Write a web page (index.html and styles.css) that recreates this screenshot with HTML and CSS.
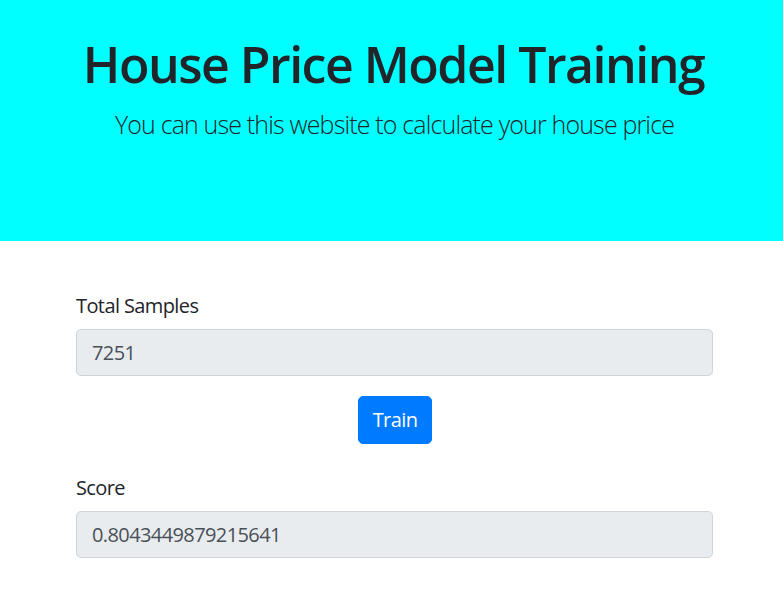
FILE: index.html
```html
<!DOCTYPE html>
<html lang="en">
<head>
<meta charset="utf-8">
<title>House Price Model Training</title>
<link rel="stylesheet" href="styles.css">
</head>
<body>
<header class="hero">
  <h1 class="hero-title">House Price Model Training</h1>
  <p class="hero-lead">You can use this website to calculate your house price</p>
</header>
<main class="container">
  <form class="train-form">
    <div class="form-group">
      <label class="form-label" for="samples">Total Samples</label>
      <input class="form-control" id="samples" type="text" value="7251" readonly>
    </div>
    <div class="actions">
      <button class="btn-train" type="button">Train</button>
    </div>
    <div class="form-group">
      <label class="form-label" for="score">Score</label>
      <input class="form-control" id="score" type="text" value="0.8043449879215641" readonly>
    </div>
  </form>
</main>
</body>
</html>
```

FILE: styles.css
```css
html, body {
  margin: 0;
  padding: 0;
  background: #ffffff;
}

body {
  font-family: "Open Sans", "Noto Sans", sans-serif;
  font-size: 20px;
  line-height: 1.5;
  color: #212529;
  letter-spacing: -0.6px;
}

.hero {
  background: #00ffff;
  padding: 34px 0 77px;
  text-align: center;
}

.hero-title {
  margin: 0 0 12px;
  padding-left: 4px;
  font-size: 50px;
  font-weight: 600;
  line-height: 1.2;
  letter-spacing: -1.5px;
  color: #212529;
}

.hero-lead {
  margin: 0 0 20px;
  padding-left: 6px;
  font-size: 25px;
  font-weight: 300;
  line-height: 1.5;
  letter-spacing: -0.85px;
}

.container {
  width: 637px;
  margin: 0 0 0 76px;
}

.train-form {
  padding-top: 50px;
}

.form-group {
  margin-bottom: 20px;
}

.form-label {
  display: block;
  margin-bottom: 8px;
  line-height: 30px;
}

.form-control {
  display: block;
  box-sizing: border-box;
  width: 100%;
  height: 47.5px;
  padding: 7.5px 15px;
  font-family: inherit;
  font-size: 20px;
  line-height: 1.5;
  letter-spacing: -0.6px;
  color: #495057;
  background: #e9ecef;
  border: 1px solid #ced4da;
  border-radius: 5px;
  outline: none;
}

.actions {
  display: flex;
  justify-content: center;
  margin-bottom: 29px;
  padding-left: 1px;
}

.btn-train {
  box-sizing: border-box;
  height: 47.5px;
  padding: 7.5px 14px;
  font-family: inherit;
  font-size: 20px;
  line-height: 1.5;
  letter-spacing: -0.6px;
  color: #ffffff;
  background: #007bff;
  border: 1px solid #007bff;
  border-radius: 5px;
}
```
